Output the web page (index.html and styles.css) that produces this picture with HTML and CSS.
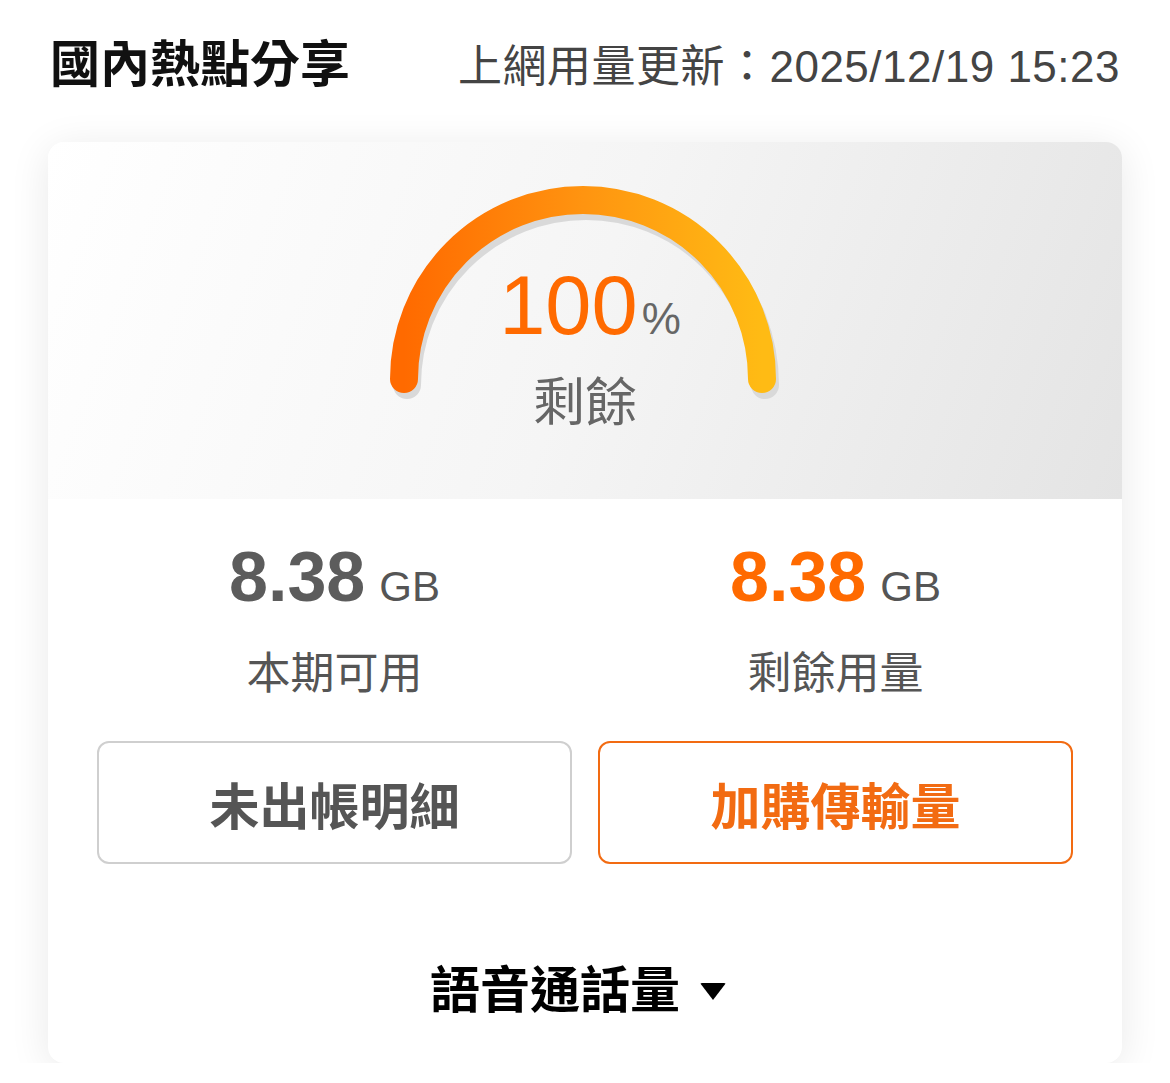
FILE: index.html
```html
<!DOCTYPE html>
<html lang="zh-Hant">
<head>
<meta charset="UTF-8">
<meta name="viewport" content="width=device-width, initial-scale=1.0">
<title>國內熱點分享</title>
<link rel="stylesheet" href="styles.css">
</head>
<body>
<div class="header">
    <div class="title">國內熱點分享</div>
    <div class="update">上網用量更新：2025/12/19 15:23</div>
</div>

<div class="card">
    <div class="gauge">
        <svg class="arc" width="420" height="230" viewBox="0 0 420 230">
            <defs>
                <linearGradient id="arcColor" x1="0" y1="0" x2="1" y2="0">
                    <stop offset="0" stop-color="#ff6a00"/>
                    <stop offset="0.5" stop-color="#ff9410"/>
                    <stop offset="1" stop-color="#ffbb14"/>
                </linearGradient>
            </defs>
            <path d="M31 207 A179 179 0 0 1 389 207" fill="none" stroke="#d9d9d9" stroke-width="28" stroke-linecap="round" transform="translate(3 6)"/>
            <path d="M31 207 A179 179 0 0 1 389 207" fill="none" stroke="url(#arcColor)" stroke-width="28" stroke-linecap="round"/>
        </svg>
        <div class="gauge-text">
            <div class="percent"><span class="num">100</span><span class="unit">%</span></div>
            <div class="left-label">剩餘</div>
        </div>
    </div>

    <div class="stats">
        <div class="stat">
            <div class="amount"><span class="value">8.38</span><span class="gb">GB</span></div>
            <div class="label">本期可用</div>
        </div>
        <div class="stat">
            <div class="amount"><span class="value orange">8.38</span><span class="gb">GB</span></div>
            <div class="label">剩餘用量</div>
        </div>
        <button class="btn">未出帳明細</button>
        <button class="btn btn-orange">加購傳輸量</button>
    </div>

    <div class="voice">
        <span>語音通話量</span>
        <span class="caret"></span>
    </div>
</div>
</body>
</html>
```

FILE: styles.css
```css
body {
    margin: 0;
    background-color: #ffffff;
    font-family: "Liberation Sans", "Noto Sans CJK TC", sans-serif;
    color: #555;
}
.header {
    height: 142px;
    box-sizing: border-box;
    padding: 38px 50px 0 50px;
    display: flex;
    justify-content: space-between;
    align-items: baseline;
}
.title {
    font-size: 50px;
    font-weight: bold;
    color: #111;
    line-height: 1.1;
}
.update {
    font-size: 44px;
    color: #444;
    line-height: 1.1;
    letter-spacing: 0.5px;
}
.card {
    margin: 0 48px;
    border-radius: 16px;
    overflow: hidden;
    background: #fff;
    box-shadow: 0 6px 40px rgba(0, 0, 0, 0.09);
}
.gauge {
    position: relative;
    height: 357px;
    background: linear-gradient(110deg, #ffffff 0%, #f5f5f5 50%, #e4e4e4 100%);
    display: flex;
    justify-content: center;
}
.arc {
    margin-top: 30px;
    margin-left: -4px;
}
.gauge-text {
    position: absolute;
    left: 0;
    right: 0;
    top: 122px;
    text-align: center;
}
.percent {
    line-height: 1;
    padding-left: 10px;
}
.num {
    font-size: 83px;
    color: #ff6a00;
}
.unit {
    font-size: 44px;
    color: #666;
    margin-left: 4px;
}
.left-label {
    margin-top: 30px;
    font-size: 52px;
    line-height: 1;
    color: #666;
}
.stats {
    display: grid;
    grid-template-columns: 1fr 1fr;
    column-gap: 26px;
    padding: 43px 49px 0 49px;
}
.stat {
    text-align: center;
}
.amount {
    line-height: 1;
}
.value {
    font-size: 70px;
    font-weight: bold;
    color: #5c5c5c;
}
.value.orange {
    color: #ff6a00;
}
.gb {
    font-size: 42px;
    color: #555;
    margin-left: 14px;
}
.label {
    margin-top: 40px;
    font-size: 44px;
    line-height: 1;
    color: #555;
}
.btn {
    margin-top: 45px;
    height: 123px;
    border: 2px solid #cfcfcf;
    border-radius: 12px;
    background: #fff;
    font-family: "Liberation Sans", "Noto Sans CJK TC", sans-serif;
    font-size: 50px;
    font-weight: bold;
    color: #555;
}
.btn-orange {
    border-color: #f26b12;
    color: #f26b12;
}
.voice {
    display: flex;
    justify-content: center;
    align-items: center;
    gap: 20px;
    padding: 102px 0 47px 0;
    font-size: 50px;
    font-weight: bold;
    line-height: 1;
    color: #000;
    margin-left: -14px;
}
.caret {
    width: 0;
    height: 0;
    border-left: 13px solid transparent;
    border-right: 13px solid transparent;
    border-top: 17px solid #000;
    border-radius: 2px;
}
```
